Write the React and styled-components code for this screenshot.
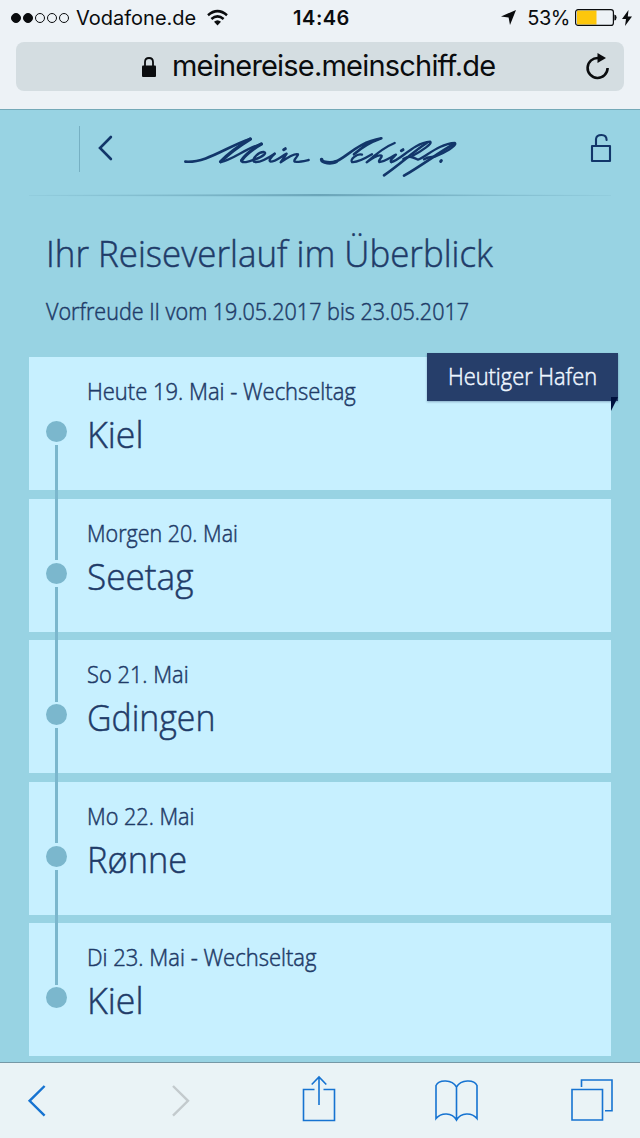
import React from 'react';
import styled, { createGlobalStyle } from 'styled-components';


const GlobalStyle = createGlobalStyle`
    * {
        box-sizing: border-box;
    }
    body {
        margin: 0;
        background: #98d3e3;
    }
`;

const SPhone = styled.div`
    display: flex;
    flex-direction: column;
    width: 640px;
    height: 1138px;
    overflow: hidden;
    background: #98d3e3;
    font-family: "Open Sans", "Noto Sans", sans-serif;
    color: #1f3b68;
`;

const SText = styled.span`
    white-space: nowrap;
    font-size: ${props => props.$size}px;
    line-height: ${props => props.$line || props.$size}px;
    letter-spacing: ${props => props.$track || 0}px;
    font-weight: ${props => props.$weight || 400};
`;

/* slightly condensed light face used for all page copy */
const SCopy = styled(SText)`
    display: inline-block;
    font-weight: 300;
    -webkit-text-stroke: 0.5px currentColor;
    transform: scaleX(${props => props.$fit || 0.95});
    transform-origin: ${props => props.$origin || "left"} center;
`;

/* browser chrome */
const SChrome = styled.header`
    flex: none;
    height: 110px;
    background: #edf2f6;
    border-bottom: 1px solid #74a9b8;
    font-family: Inter, "Liberation Sans", sans-serif;
    color: #0a0c0e;
`;

const SStatus = styled.div`
    display: grid;
    grid-template-columns: 1fr auto 1fr;
    align-items: center;
    height: 42px;
    padding: 0 8px 7px 11px;
`;

const SStatusGroup = styled.div`
    display: flex;
    align-items: center;
    justify-content: ${props => props.$end ? "flex-end" : "flex-start"};
`;

const SSignal = styled.div`
    display: flex;
    gap: 2px;
    margin-right: 7px;
`;

const SSignalDot = styled.i`
    width: 10px;
    height: 10px;
    border-radius: 50%;
    border: 1px solid #0a0c0e;
    background: ${props => props.$on ? "#0a0c0e" : "transparent"};
`;

const SIcon = styled.svg`
    display: block;
    flex: none;
    overflow: visible;
    width: ${props => props.$w}px;
    height: ${props => props.$h}px;
    margin: ${props => props.$m || "0"};
    fill: none;
    stroke: currentColor;
`;

const SAddress = styled.div`
    display: flex;
    align-items: center;
    height: 49px;
    margin: 0 16px;
    padding: 0 14px 0 126px;
    border-radius: 8px;
    background: #d4dde1;
`;

const SUrl = styled(SText)`
    flex: 1;
    margin: -1px 0 0 16px;
`;

/* page */
const SPage = styled.main`
    flex: 1;
    min-height: 0;
    overflow: hidden;
    padding: 0 29px;
`;

const SPageHead = styled.div`
    display: flex;
    align-items: flex-start;
    height: 84px;
    padding: 16px 0 0 50px;
    color: #12366a;
`;

const SDivider = styled.div`
    width: 1px;
    height: 46px;
    background: #76b0c3;
`;

const SRule = styled.div`
    height: 3px;
    background: linear-gradient(to right, rgba(92,150,171,.1), rgba(92,150,171,.75) 50%, rgba(92,150,171,.1));
    clip-path: polygon(0 33%, 50% 0, 100% 33%, 100% 66%, 50% 75%, 0 66%);
`;

const STitle = styled.h1`
    display: flex;
    margin: 34px 0 0 17px;
`;

const SSubtitle = styled.p`
    display: flex;
    margin: 21px 0 0 17px;
`;

const SList = styled.ol`
    display: grid;
    grid-auto-rows: 133px;
    row-gap: 8.5px;
    margin: 31px 0 0;
    padding: 0;
    list-style: none;
`;

const SStop = styled.li`
    position: relative;
    display: grid;
    grid-template-columns: 58px 1fr;
    background: #c7f0ff;
`;

const SMarker = styled.div`
    display: flex;
    flex-direction: column;
    align-items: center;
    width: 21px;
    margin: 64px 0 0 17px;
`;

const SDot = styled.i`
    flex: none;
    width: 21px;
    height: 21px;
    border-radius: 50%;
    background: #7bb7cd;
`;

/* runs over the gap down to the next stop */
const SLine = styled.i`
    position: relative;
    z-index: 1;
    flex: none;
    width: 3px;
    height: 115px;
    margin-top: 3px;
    background: #7bb7cd;
`;

const SStopText = styled.div`
    display: flex;
    flex-direction: column;
    gap: 3px;
    height: 133px;
    padding-top: 19px;
`;

const SRibbon = styled.div`
    position: absolute;
    top: -4px;
    right: -7px;
    display: flex;
    align-items: center;
    justify-content: center;
    width: 191px;
    height: 48px;
    padding-bottom: 2px;
    background: #263e6a;
    color: #eef6ff;
    box-shadow: 0 1px 2px rgba(20,50,90,.35);
    &::after {
        content: "";
        position: absolute;
        right: 0;
        top: 44px;
        width: 7px;
        height: 14px;
        background: #00113d;
        clip-path: polygon(0 0, 100% 0, 0 100%);
    }
`;

/* bottom bar */
const SToolbar = styled.nav`
    display: flex;
    flex: none;
    align-items: flex-start;
    height: 76px;
    padding: 14px 0 0 28px;
    border-top: 1px solid #7598a6;
    background: #eaf3f6;
    color: #1673d1;
`;

const stops = [
    { day: "Heute 19. Mai - Wechseltag", port: "Kiel", today: true, dayFit: 0.955, portFit: 0.965 },
    { day: "Morgen 20. Mai", port: "Seetag", dayFit: 0.935, portFit: 0.95 },
    { day: "So 21. Mai", port: "Gdingen", dayFit: 0.95, portFit: 0.915 },
    { day: "Mo 22. Mai", port: "Rønne", dayFit: 0.94, portFit: 0.93 },
    { day: "Di 23. Mai - Wechseltag", port: "Kiel", dayFit: 0.957, portFit: 0.965 },
];

const StatusBar = () => (
    <SStatus>
        <SStatusGroup>
            <SSignal>
                {[1, 1, 0, 0, 0].map((on, i) => <SSignalDot key={i} $on={on} />)}
            </SSignal>
            <SText $size={20}>Vodafone.de</SText>
            <SIcon $w={21} $h={16} $m="0 0 0 11px" viewBox="0 0 21 16" strokeWidth="2.5">
                <path d="M1 5.2 Q10.5 -3 20 5.2" />
                <path d="M4.4 9 Q10.5 3.8 16.6 9" />
                <path d="M7 11.8 Q10.5 8.8 14 11.8 L10.5 15.5 Z" fill="currentColor" stroke="none" />
            </SIcon>
        </SStatusGroup>
        <SText $size={20} $weight={600} $track={0.5}>14:46</SText>
        <SStatusGroup $end>
            <SIcon $w={15} $h={15} $m="0 11px 0 0" viewBox="0 0 15 15">
                <path d="M15 0 L9 15 L7.6 7.4 L0 6.4 Z" fill="currentColor" stroke="none" />
            </SIcon>
            <SText $size={20} $track={-0.5}>53%</SText>
            <SIcon $w={42} $h={17} $m="0 5px" viewBox="0 0 42 17">
                <path d="M2 1.5 H21.5 V15.5 H2 Z" fill="#fdc70c" stroke="none" />
                <rect x="0.6" y="0.6" width="37.8" height="15.8" rx="2.5" strokeWidth="1.2" />
                <path d="M39.4 5.5 Q41.6 6 41.6 8.5 Q41.6 11 39.4 11.5 Z" fill="currentColor" stroke="none" />
            </SIcon>
            <SIcon $w={10} $h={16} viewBox="0 0 10 16">
                <path d="M6.5 0 L0 9 H4 L3 16 L10 6.4 H5.8 Z" fill="currentColor" stroke="none" />
            </SIcon>
        </SStatusGroup>
    </SStatus>
)

const AddressBar = () => (
    <SAddress>
        <SIcon $w={14} $h={20} viewBox="0 0 14 20">
            <rect x="0" y="8.5" width="14" height="11.5" rx="1" fill="currentColor" stroke="none" />
            <path d="M3 9 V5 Q3 1 7 1 Q11 1 11 5 V9" strokeWidth="1.8" />
        </SIcon>
        <SUrl $size={29} $line={34} $track={-0.8}>meinereise.meinschiff.de</SUrl>
        <SIcon $w={24} $h={26} $m="-2px 0 0" viewBox="0 0 24 26" strokeWidth="2.6">
            <path d="M12.5 5 A10 10 0 1 0 21.6 15" />
            <path d="M11.5 0 L20 5 L11.5 10 Z" fill="currentColor" stroke="none" />
        </SIcon>
    </SAddress>
)

/* handwritten brand signature */
const Logo = () => (
    <SIcon $w={300} $h={60} $m="-1px 0 0 58px" viewBox="0 0 900 180" strokeLinecap="round" strokeLinejoin="round" strokeWidth="7">
        <path d="M46 110 C110 115 175 62 241 42" strokeWidth="8" />
        <path d="M241 42 C215 58 178 84 152 110 M274 57 C250 70 224 92 215 106" strokeWidth="10" />
        <path d="M152 111 C190 104 222 72 274 57 M214 107 C214 116 238 110 252 104 C280 94 292 84 282 81 C266 80 244 102 252 110 C266 115 290 102 314 86" />
        <path d="M314 86 C302 98 294 108 302 110 C316 110 334 94 350 86 C344 96 336 106 332 112 C352 98 376 84 384 88 C386 92 368 106 374 110 C386 112 402 108 416 105" />
        <path d="M455 104 C456 114 484 116 498 110" strokeWidth="11" />
        <path d="M490 113 C530 100 556 54 634 40 C600 52 572 70 552 88" strokeWidth="8" />
        <path d="M576 89 C562 84 538 104 546 111 C562 113 586 100 606 88" />
        <path d="M674 54 C644 66 614 90 590 112 C606 100 626 88 634 92 C640 95 622 106 628 111 C642 111 660 98 678 89 C668 99 658 107 664 111" />
        <path d="M664 111 C692 106 730 54 780 50 C790 54 756 78 728 92" />
        <path d="M770 54 C730 80 690 118 642 151 M852 57 C810 80 760 118 702 152" strokeWidth="8" />
        <path d="M700 102 C720 90 732 98 744 104 C768 96 806 56 855 54 C862 62 822 84 796 94 M762 103 C776 93 788 98 796 94" />
        <path d="M341 74 L346 71 M694 77 L699 74 M812 109 L814 107" strokeWidth="9" />
    </SIcon>
)

const PageHead = () => (
    <SPageHead>
        <SDivider />
        <SIcon $w={14} $h={24} $m="10px 0 0 18px" viewBox="0 0 14 24" strokeWidth="2.6" strokeLinecap="round">
            <path d="M12.9 1 L2 12 L12.9 23" />
        </SIcon>
        <Logo />
        <SIcon $w={20} $h={28} $m="8px 0 0 121px" viewBox="0 0 20 28" strokeWidth="2.1" strokeLinejoin="round" strokeLinecap="round">
            <rect x="1" y="12" width="18" height="15" />
            <path d="M5 12 V5 Q5.4 1 10.5 1 Q15.6 1 15.6 6" />
        </SIcon>
    </SPageHead>
)

const Toolbar = () => (
    <SToolbar>
        <SIcon $w={18} $h={32} $m="8px 0 0" viewBox="0 0 18 32" strokeWidth="2.4">
            <path d="M16.6 1 L1.6 15.8 L16.6 30.6" />
        </SIcon>
        <SIcon $w={18} $h={32} $m="8px 0 0 126px" viewBox="0 0 18 32" strokeWidth="2.4" color="#c3cacd">
            <path d="M1 1 L16 15.8 L1 30.6" />
        </SIcon>
        <SIcon $w={34} $h={46} $m="-1px 0 0 112px" viewBox="0 0 34 46" strokeWidth="1.6">
            <path d="M12.5 13.5 H1.5 V44.5 H32.5 V13.5 H21.5" />
            <path d="M17 29 V1 M9.7 8.5 L17 1 L24.3 8.5" />
        </SIcon>
        <SIcon $w={43} $h={42} $m="3px 0 0 99px" viewBox="0 0 43 42" strokeWidth="1.6">
            <path d="M21.5 7 C17 -0.8 4 -0.8 1 5.500 V38.500 C6 32.500 17 32 21.500 40 C26 32 37 32.500 42 38.500 V5.500 C39 -0.8 26 -0.8 21.500 7 V40" />
        </SIcon>
        <SIcon $w={42} $h={42} $m="2px 0 0 93px" viewBox="0 0 42 42" strokeWidth="1.6">
            <path d="M1 10.5 H31.5 V41 H1 Z M10.5 8 V1 H41 V31.7 H34" />
        </SIcon>
    </SToolbar>
)

const Stop = ({ stop, last }) => {
    return (
        <SStop>
            <SMarker>
                <SDot />
                {!last && <SLine />}
            </SMarker>
            <SStopText>
                <SCopy $size={23} $line={30} $fit={stop.dayFit}>{stop.day}</SCopy>
                <SCopy $size={37} $line={50} $fit={stop.portFit}>{stop.port}</SCopy>
            </SStopText>
            {stop.today && <SRibbon><SCopy $size={23} $line={30} $origin="center">Heutiger Hafen</SCopy></SRibbon>}
        </SStop>
    )
}

const App = () => {
    return (
        <SPhone>
            <GlobalStyle />
            <SChrome>
                <StatusBar />
                <AddressBar />
            </SChrome>
            <SPage>
                <PageHead />
                <SRule />
                <STitle><SCopy $size={37} $line={44} $fit={0.943}>Ihr Reiseverlauf im Überblick</SCopy></STitle>
                <SSubtitle><SCopy $size={23} $line={30} $fit={0.937}>Vorfreude II vom 19.05.2017 bis 23.05.2017</SCopy></SSubtitle>
                <SList>
                    {stops.map((stop, i) => {
                        return <Stop key={i} stop={stop} last={i === stops.length - 1} />
                    })}
                </SList>
            </SPage>
            <Toolbar />
        </SPhone>
    )
}
export default App;
